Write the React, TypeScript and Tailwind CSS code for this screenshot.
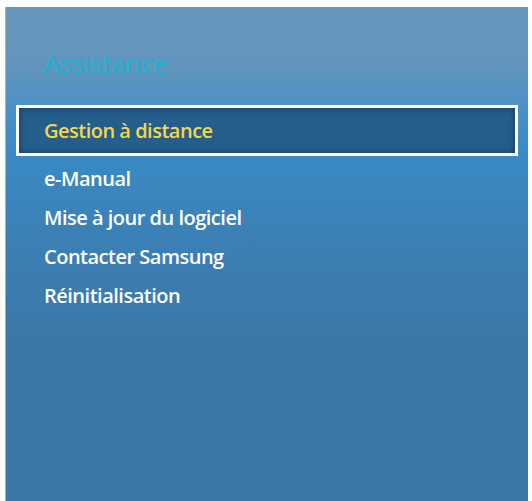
import React from 'react';

const items = ['e-Manual', 'Mise à jour du logiciel', 'Contacter Samsung', 'Réinitialisation'];

const App: React.FC = () => {
  return (
    <div className="w-[532px] h-[501px] bg-white pt-[7px] pl-[5px] overflow-hidden" style={{ fontFamily: '"Open Sans", Lato, sans-serif' }}>
      <div className="w-[523px] h-[494px] border-l border-[#9fb3c4] bg-[linear-gradient(180deg,#6897bc_0px,#6395bc_60px,#4c91c6_100px,#3a8bc6_140px,#3b7fb4_240px,#3b78a8_330px,#3b77a7_494px)]">
        <div className="pt-[40px] pl-[38px] h-[98px]">
          <h1 className="text-[26px] leading-[32px] text-[#16b4d6] tracking-[-0.3px]">Assistance</h1>
        </div>
        <div className="ml-[10px] mr-[10px] h-[51px] border-[3px] border-white bg-[#255d8b] shadow-[inset_0_0_6px_rgba(10,30,60,0.6)] flex items-center pl-[25px]">
          <span className="text-[20px] font-semibold text-[#f2d84c] tracking-[-0.5px]">Gestion à distance</span>
        </div>
        <ul className="mt-[3px]">
          {items.map((t) => (
            <li key={t} className="h-[39px] flex items-center pl-[38px] text-[20px] font-semibold text-white tracking-[-0.5px]">
              {t}
            </li>
          ))}
        </ul>
      </div>
    </div>
  );
};

export default App;
